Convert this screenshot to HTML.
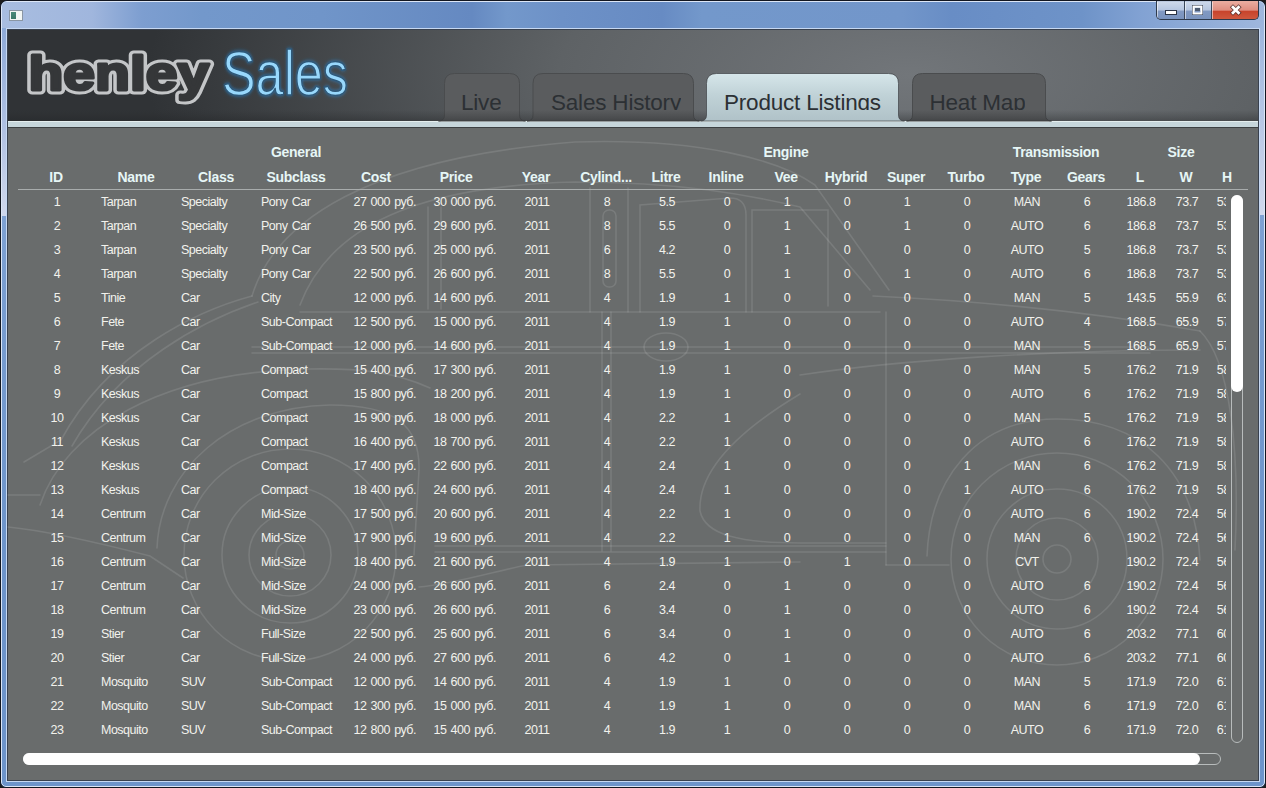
<!DOCTYPE html>
<html><head><meta charset="utf-8">
<style>
*{margin:0;padding:0;box-sizing:border-box}
html,body{width:1266px;height:788px;overflow:hidden;background:#1c1c1c}
body{position:relative;font-family:"Liberation Sans",sans-serif}
.abs{position:absolute}
#frame{position:absolute;left:0;top:0;width:1266px;height:788px;border-radius:7px 7px 6px 6px;overflow:hidden;
  background:linear-gradient(180deg,rgba(170,195,230,0.5) 0%,rgba(150,180,225,0.25) 40%,rgba(110,150,205,0) 70%),#6d94ca;
  border:1px solid #121620;}
#tb{position:absolute;left:2px;top:2px;width:1262px;height:26px;border-radius:5px 5px 0 0;background:linear-gradient(90deg,#a8bde0 0px,#a0b6dd 90px,#7d9ed0 140px,#7398cb 200px,#7095c9 320px,#6589c1 470px,#7398cb 505px,#6d91c7 560px,#678bc3 660px,#7398cb 700px,#7296ca 900px,#688dc5 950px,#6e93c8 1080px,#82a2d3 1140px,#9fb7dd 1262px)}
#frame:before{content:"";position:absolute;left:0;top:0;right:0;bottom:0;border:1px solid #dce6f6;border-radius:6px 6px 5px 5px}
#sideL{position:absolute;left:2px;top:29px;width:4px;height:187px;background:linear-gradient(#8eaad8,#b4c4e4 60%,#d0d8ec)}
#sideR{position:absolute;left:1260px;top:20px;width:4px;height:195px;background:linear-gradient(#9ab4dc,#bccae6 60%,#d0d8ec)}
#inner{position:absolute;left:6px;top:28px;width:1254px;height:754px;border:1px solid #c6d8f2}
#content{position:absolute;left:7px;top:29px;width:1252px;height:752px;border:1px solid #39414e;background:#696c6c;overflow:hidden}
#hdr{position:absolute;left:0;top:0;width:1250px;height:91px;
  background:radial-gradient(ellipse 760px 300px at 900px 45px,#72767a 0%,#5e6265 46%,#303336 100%)}
#hdrshade{position:absolute;left:0;top:75px;width:1250px;height:16px;background:linear-gradient(rgba(40,42,44,0),rgba(40,42,44,0.35))}
#band{position:absolute;left:0;top:91px;width:1250px;height:6px;background:#c6d6db;border-top:1px solid #e4eeee}
#bandline{position:absolute;left:0;top:97px;width:1250px;height:1px;background:#3c4042}
.dt{position:absolute;word-spacing:1.2px;font-size:12.5px;letter-spacing:-0.5px;color:#f2f2ec;line-height:18px;white-space:nowrap}
.hd{position:absolute;font-size:14px;letter-spacing:-0.3px;color:#e6f6f6;font-weight:bold;line-height:18px;white-space:nowrap}
#tbl{position:absolute;left:0;top:0;width:1266px;height:788px}
#clip{position:absolute;left:0;top:0;width:1226px;height:745px;overflow:hidden}
#sep{position:absolute;left:18px;top:189px;width:1230px;height:1px;background:#a8acac}
#vtrack{position:absolute;left:1231px;top:195px;width:12px;height:548px;border:1px solid #b8bcbc;border-radius:6px}
#vthumb{position:absolute;left:1231px;top:195px;width:12px;height:197px;background:#fff;border-radius:6px}
#htrack{position:absolute;left:23px;top:753px;width:1198px;height:12px;border:1px solid #b8bcbc;border-radius:6px}
#hthumb{position:absolute;left:23px;top:753px;width:1177px;height:12px;background:#fff;border-radius:6px}
.tl{position:absolute;top:89.5px;font-size:22.5px;color:#2c3034;white-space:nowrap;letter-spacing:-0.2px;height:20.5px;overflow:hidden;line-height:26px}
.tab{position:absolute;top:73px;height:48px;border-radius:11px 11px 0 0;background:#5b5d5e;border:1px solid #4c4e50;border-bottom:none;overflow:hidden}
.tab span{position:absolute;top:15.5px;font-size:22.5px;color:#2c3034;white-space:nowrap;letter-spacing:-0.3px;height:21px;overflow:hidden;line-height:26px}
#btns{position:absolute;left:1156px;top:1px;width:103px;height:19px;border:1px solid #2e3a4c;border-top:none;border-radius:0 0 5px 5px;overflow:hidden;background:#777}
#btns div{position:absolute;top:0;height:19px;border-left:1px solid rgba(255,255,255,0.55);border-top:1px solid rgba(255,255,255,0.5)}
#bmin{left:0;width:28px;background:linear-gradient(#cdd8ea 0%,#b6c6e0 45%,#8199c2 50%,#7892bd 100%)}
#bmax{left:28px;width:27px;background:linear-gradient(#cdd8ea 0%,#b6c6e0 45%,#8199c2 50%,#7892bd 100%);box-shadow:-1px 0 0 #3a4658}
#bcls{left:55px;width:47px;background:linear-gradient(#eaaa9e 0%,#df8e80 45%,#c8442c 52%,#d05a40 100%);box-shadow:-1px 0 0 #3a4658}
#wicon{position:absolute;left:9px;top:10px;width:14px;height:11px;background:#f2f6f4;border:1px solid #8a96a4}
#wicon:before{content:"";position:absolute;left:1px;top:1px;width:5px;height:7px;background:linear-gradient(#4a8a7a,#3a7868)}
</style></head><body>
<div id="frame"></div>
<div id="tb"></div>
<div id="sideL"></div><div id="sideR"></div>
<div id="inner"></div>
<div id="wicon"></div>
<div id="btns"><div id="bmin"></div><div id="bmax"></div><div id="bcls"></div></div>
<svg class="abs" style="left:1150px;top:0" width="116" height="22">
 <rect x="15.5" y="10.5" width="11" height="4" fill="#fff" stroke="#2a3344" stroke-width="1"/>
 <rect x="42.5" y="5.5" width="10" height="9" fill="none" stroke="#2a3344" stroke-width="1"/>
 <rect x="43.5" y="6.5" width="8" height="7" fill="none" stroke="#fff" stroke-width="2"/>
 <rect x="45" y="8" width="5" height="3" fill="#4c5a70"/>
 <path d="M83,7.3 L88.5,12.7 M88.5,7.3 L83,12.7" stroke="#4a2a28" stroke-width="4.4" stroke-linecap="square" opacity="0.85"/>
 <path d="M83,7.3 L88.5,12.7 M88.5,7.3 L83,12.7" stroke="#ffffff" stroke-width="2.8" stroke-linecap="square"/>
</svg>
<div id="content">
 <div id="hdr"></div>

 <div id="band"></div>
 <div id="bandline"></div>
</div>
<svg class="abs" style="left:0;top:0" width="1266" height="788">
<g fill="none" stroke="#ffffff" stroke-opacity="0.11" stroke-width="1.6" stroke-linecap="round">
 <circle cx="290" cy="555" r="14"/><circle cx="290" cy="555" r="41"/><circle cx="290" cy="555" r="68"/><circle cx="290" cy="555" r="106"/>
 <circle cx="1057" cy="559" r="14"/><circle cx="1057" cy="559" r="41"/><circle cx="1057" cy="559" r="70"/><circle cx="1057" cy="559" r="106"/>
 <path d="M157,548 C160,470 230,407 330,405 C395,405 420,425 419,470 L414,555"/>
 <path d="M40,505 C65,430 160,372 308,369 C360,368 395,372 430,388"/>
 <path d="M927,556 C930,480 975,419 1057,419 C1140,419 1195,470 1200,560"/>
 <path d="M252,296 C275,220 370,158 575,142 C700,138 780,160 815,185 L889,290"/>
 <path d="M300,305 C330,225 420,186 575,182 C680,182 750,195 800,207 L870,290"/>
 <path d="M252,296 C200,310 110,350 61,440 L24,462"/>
 <path d="M258,302 C205,320 120,362 72,446"/>
 <path d="M428,207 L428,309 M441,207 L441,309"/>
 <path d="M590,188 L590,312 M628,188 L628,312"/>
 <rect x="603" y="210" width="13" height="77" rx="6"/>
 <path d="M640,312 L640,205 L730,198 Q746,198 746,215 L746,312"/>
 <path d="M752,312 L752,210 L828,210 L828,306"/>
 <path d="M300,312 L880,312"/>
 <path d="M252,347 L1150,347 M252,353 L1150,353"/>
 <ellipse cx="666" cy="347" rx="22" ry="14"/>
 <path d="M602,312 L602,551 M611,312 L611,551 M886,312 L886,565"/>
 <path d="M435,546 L886,546 M435,552 L886,552 M886,565 L949,565"/>
 <path d="M419,587 C450,585 500,570 527,565 L800,562"/>
 <path d="M873,296 C960,300 1080,310 1200,331"/>
 <path d="M8,495 L40,495 M8,527 C40,530 80,538 150,556 L183,578"/>
 <path d="M1200,331 C1230,360 1240,450 1235,550"/>
 <path d="M800,394 C740,430 698,470 700,511 C705,535 740,543 800,543 L886,543"/>
 <path d="M800,375 C900,360 1050,350 1200,350"/>
</g>
</svg>

<div id="tbl">
 <div id="clip">
<div class="dt" style="left:17px;top:192.5px;width:80px;text-align:center">1</div>
<div class="dt" style="left:101px;top:192.5px">Tarpan</div>
<div class="dt" style="left:181px;top:192.5px">Specialty</div>
<div class="dt" style="left:261px;top:192.5px">Pony Car</div>
<div class="dt" style="left:336px;top:192.5px;width:80px;text-align:right">27 000 руб.</div>
<div class="dt" style="left:416px;top:192.5px;width:80px;text-align:right">30 000 руб.</div>
<div class="dt" style="left:497px;top:192.5px;width:80px;text-align:center">2011</div>
<div class="dt" style="left:577px;top:192.5px;width:60px;text-align:center">8</div>
<div class="dt" style="left:637px;top:192.5px;width:60px;text-align:center">5.5</div>
<div class="dt" style="left:697px;top:192.5px;width:60px;text-align:center">0</div>
<div class="dt" style="left:757px;top:192.5px;width:60px;text-align:center">1</div>
<div class="dt" style="left:817px;top:192.5px;width:60px;text-align:center">0</div>
<div class="dt" style="left:877px;top:192.5px;width:60px;text-align:center">1</div>
<div class="dt" style="left:937px;top:192.5px;width:60px;text-align:center">0</div>
<div class="dt" style="left:997px;top:192.5px;width:60px;text-align:center">MAN</div>
<div class="dt" style="left:1057px;top:192.5px;width:60px;text-align:center">6</div>
<div class="dt" style="left:1117px;top:192.5px;width:48px;text-align:center">186.8</div>
<div class="dt" style="left:1165px;top:192.5px;width:44px;text-align:center">73.7</div>
<div class="dt" style="left:1209px;top:192.5px;width:38px;text-align:center">53.3</div>
<div class="dt" style="left:17px;top:216.5px;width:80px;text-align:center">2</div>
<div class="dt" style="left:101px;top:216.5px">Tarpan</div>
<div class="dt" style="left:181px;top:216.5px">Specialty</div>
<div class="dt" style="left:261px;top:216.5px">Pony Car</div>
<div class="dt" style="left:336px;top:216.5px;width:80px;text-align:right">26 500 руб.</div>
<div class="dt" style="left:416px;top:216.5px;width:80px;text-align:right">29 600 руб.</div>
<div class="dt" style="left:497px;top:216.5px;width:80px;text-align:center">2011</div>
<div class="dt" style="left:577px;top:216.5px;width:60px;text-align:center">8</div>
<div class="dt" style="left:637px;top:216.5px;width:60px;text-align:center">5.5</div>
<div class="dt" style="left:697px;top:216.5px;width:60px;text-align:center">0</div>
<div class="dt" style="left:757px;top:216.5px;width:60px;text-align:center">1</div>
<div class="dt" style="left:817px;top:216.5px;width:60px;text-align:center">0</div>
<div class="dt" style="left:877px;top:216.5px;width:60px;text-align:center">1</div>
<div class="dt" style="left:937px;top:216.5px;width:60px;text-align:center">0</div>
<div class="dt" style="left:997px;top:216.5px;width:60px;text-align:center">AUTO</div>
<div class="dt" style="left:1057px;top:216.5px;width:60px;text-align:center">6</div>
<div class="dt" style="left:1117px;top:216.5px;width:48px;text-align:center">186.8</div>
<div class="dt" style="left:1165px;top:216.5px;width:44px;text-align:center">73.7</div>
<div class="dt" style="left:1209px;top:216.5px;width:38px;text-align:center">53.3</div>
<div class="dt" style="left:17px;top:240.5px;width:80px;text-align:center">3</div>
<div class="dt" style="left:101px;top:240.5px">Tarpan</div>
<div class="dt" style="left:181px;top:240.5px">Specialty</div>
<div class="dt" style="left:261px;top:240.5px">Pony Car</div>
<div class="dt" style="left:336px;top:240.5px;width:80px;text-align:right">23 500 руб.</div>
<div class="dt" style="left:416px;top:240.5px;width:80px;text-align:right">25 000 руб.</div>
<div class="dt" style="left:497px;top:240.5px;width:80px;text-align:center">2011</div>
<div class="dt" style="left:577px;top:240.5px;width:60px;text-align:center">6</div>
<div class="dt" style="left:637px;top:240.5px;width:60px;text-align:center">4.2</div>
<div class="dt" style="left:697px;top:240.5px;width:60px;text-align:center">0</div>
<div class="dt" style="left:757px;top:240.5px;width:60px;text-align:center">1</div>
<div class="dt" style="left:817px;top:240.5px;width:60px;text-align:center">0</div>
<div class="dt" style="left:877px;top:240.5px;width:60px;text-align:center">0</div>
<div class="dt" style="left:937px;top:240.5px;width:60px;text-align:center">0</div>
<div class="dt" style="left:997px;top:240.5px;width:60px;text-align:center">AUTO</div>
<div class="dt" style="left:1057px;top:240.5px;width:60px;text-align:center">5</div>
<div class="dt" style="left:1117px;top:240.5px;width:48px;text-align:center">186.8</div>
<div class="dt" style="left:1165px;top:240.5px;width:44px;text-align:center">73.7</div>
<div class="dt" style="left:1209px;top:240.5px;width:38px;text-align:center">53.3</div>
<div class="dt" style="left:17px;top:264.5px;width:80px;text-align:center">4</div>
<div class="dt" style="left:101px;top:264.5px">Tarpan</div>
<div class="dt" style="left:181px;top:264.5px">Specialty</div>
<div class="dt" style="left:261px;top:264.5px">Pony Car</div>
<div class="dt" style="left:336px;top:264.5px;width:80px;text-align:right">22 500 руб.</div>
<div class="dt" style="left:416px;top:264.5px;width:80px;text-align:right">26 600 руб.</div>
<div class="dt" style="left:497px;top:264.5px;width:80px;text-align:center">2011</div>
<div class="dt" style="left:577px;top:264.5px;width:60px;text-align:center">8</div>
<div class="dt" style="left:637px;top:264.5px;width:60px;text-align:center">5.5</div>
<div class="dt" style="left:697px;top:264.5px;width:60px;text-align:center">0</div>
<div class="dt" style="left:757px;top:264.5px;width:60px;text-align:center">1</div>
<div class="dt" style="left:817px;top:264.5px;width:60px;text-align:center">0</div>
<div class="dt" style="left:877px;top:264.5px;width:60px;text-align:center">1</div>
<div class="dt" style="left:937px;top:264.5px;width:60px;text-align:center">0</div>
<div class="dt" style="left:997px;top:264.5px;width:60px;text-align:center">AUTO</div>
<div class="dt" style="left:1057px;top:264.5px;width:60px;text-align:center">6</div>
<div class="dt" style="left:1117px;top:264.5px;width:48px;text-align:center">186.8</div>
<div class="dt" style="left:1165px;top:264.5px;width:44px;text-align:center">73.7</div>
<div class="dt" style="left:1209px;top:264.5px;width:38px;text-align:center">53.3</div>
<div class="dt" style="left:17px;top:288.5px;width:80px;text-align:center">5</div>
<div class="dt" style="left:101px;top:288.5px">Tinie</div>
<div class="dt" style="left:181px;top:288.5px">Car</div>
<div class="dt" style="left:261px;top:288.5px">City</div>
<div class="dt" style="left:336px;top:288.5px;width:80px;text-align:right">12 000 руб.</div>
<div class="dt" style="left:416px;top:288.5px;width:80px;text-align:right">14 600 руб.</div>
<div class="dt" style="left:497px;top:288.5px;width:80px;text-align:center">2011</div>
<div class="dt" style="left:577px;top:288.5px;width:60px;text-align:center">4</div>
<div class="dt" style="left:637px;top:288.5px;width:60px;text-align:center">1.9</div>
<div class="dt" style="left:697px;top:288.5px;width:60px;text-align:center">1</div>
<div class="dt" style="left:757px;top:288.5px;width:60px;text-align:center">0</div>
<div class="dt" style="left:817px;top:288.5px;width:60px;text-align:center">0</div>
<div class="dt" style="left:877px;top:288.5px;width:60px;text-align:center">0</div>
<div class="dt" style="left:937px;top:288.5px;width:60px;text-align:center">0</div>
<div class="dt" style="left:997px;top:288.5px;width:60px;text-align:center">MAN</div>
<div class="dt" style="left:1057px;top:288.5px;width:60px;text-align:center">5</div>
<div class="dt" style="left:1117px;top:288.5px;width:48px;text-align:center">143.5</div>
<div class="dt" style="left:1165px;top:288.5px;width:44px;text-align:center">55.9</div>
<div class="dt" style="left:1209px;top:288.5px;width:38px;text-align:center">63.1</div>
<div class="dt" style="left:17px;top:312.5px;width:80px;text-align:center">6</div>
<div class="dt" style="left:101px;top:312.5px">Fete</div>
<div class="dt" style="left:181px;top:312.5px">Car</div>
<div class="dt" style="left:261px;top:312.5px">Sub-Compact</div>
<div class="dt" style="left:336px;top:312.5px;width:80px;text-align:right">12 500 руб.</div>
<div class="dt" style="left:416px;top:312.5px;width:80px;text-align:right">15 000 руб.</div>
<div class="dt" style="left:497px;top:312.5px;width:80px;text-align:center">2011</div>
<div class="dt" style="left:577px;top:312.5px;width:60px;text-align:center">4</div>
<div class="dt" style="left:637px;top:312.5px;width:60px;text-align:center">1.9</div>
<div class="dt" style="left:697px;top:312.5px;width:60px;text-align:center">1</div>
<div class="dt" style="left:757px;top:312.5px;width:60px;text-align:center">0</div>
<div class="dt" style="left:817px;top:312.5px;width:60px;text-align:center">0</div>
<div class="dt" style="left:877px;top:312.5px;width:60px;text-align:center">0</div>
<div class="dt" style="left:937px;top:312.5px;width:60px;text-align:center">0</div>
<div class="dt" style="left:997px;top:312.5px;width:60px;text-align:center">AUTO</div>
<div class="dt" style="left:1057px;top:312.5px;width:60px;text-align:center">4</div>
<div class="dt" style="left:1117px;top:312.5px;width:48px;text-align:center">168.5</div>
<div class="dt" style="left:1165px;top:312.5px;width:44px;text-align:center">65.9</div>
<div class="dt" style="left:1209px;top:312.5px;width:38px;text-align:center">57.1</div>
<div class="dt" style="left:17px;top:336.5px;width:80px;text-align:center">7</div>
<div class="dt" style="left:101px;top:336.5px">Fete</div>
<div class="dt" style="left:181px;top:336.5px">Car</div>
<div class="dt" style="left:261px;top:336.5px">Sub-Compact</div>
<div class="dt" style="left:336px;top:336.5px;width:80px;text-align:right">12 000 руб.</div>
<div class="dt" style="left:416px;top:336.5px;width:80px;text-align:right">14 600 руб.</div>
<div class="dt" style="left:497px;top:336.5px;width:80px;text-align:center">2011</div>
<div class="dt" style="left:577px;top:336.5px;width:60px;text-align:center">4</div>
<div class="dt" style="left:637px;top:336.5px;width:60px;text-align:center">1.9</div>
<div class="dt" style="left:697px;top:336.5px;width:60px;text-align:center">1</div>
<div class="dt" style="left:757px;top:336.5px;width:60px;text-align:center">0</div>
<div class="dt" style="left:817px;top:336.5px;width:60px;text-align:center">0</div>
<div class="dt" style="left:877px;top:336.5px;width:60px;text-align:center">0</div>
<div class="dt" style="left:937px;top:336.5px;width:60px;text-align:center">0</div>
<div class="dt" style="left:997px;top:336.5px;width:60px;text-align:center">MAN</div>
<div class="dt" style="left:1057px;top:336.5px;width:60px;text-align:center">5</div>
<div class="dt" style="left:1117px;top:336.5px;width:48px;text-align:center">168.5</div>
<div class="dt" style="left:1165px;top:336.5px;width:44px;text-align:center">65.9</div>
<div class="dt" style="left:1209px;top:336.5px;width:38px;text-align:center">57.1</div>
<div class="dt" style="left:17px;top:360.5px;width:80px;text-align:center">8</div>
<div class="dt" style="left:101px;top:360.5px">Keskus</div>
<div class="dt" style="left:181px;top:360.5px">Car</div>
<div class="dt" style="left:261px;top:360.5px">Compact</div>
<div class="dt" style="left:336px;top:360.5px;width:80px;text-align:right">15 400 руб.</div>
<div class="dt" style="left:416px;top:360.5px;width:80px;text-align:right">17 300 руб.</div>
<div class="dt" style="left:497px;top:360.5px;width:80px;text-align:center">2011</div>
<div class="dt" style="left:577px;top:360.5px;width:60px;text-align:center">4</div>
<div class="dt" style="left:637px;top:360.5px;width:60px;text-align:center">1.9</div>
<div class="dt" style="left:697px;top:360.5px;width:60px;text-align:center">1</div>
<div class="dt" style="left:757px;top:360.5px;width:60px;text-align:center">0</div>
<div class="dt" style="left:817px;top:360.5px;width:60px;text-align:center">0</div>
<div class="dt" style="left:877px;top:360.5px;width:60px;text-align:center">0</div>
<div class="dt" style="left:937px;top:360.5px;width:60px;text-align:center">0</div>
<div class="dt" style="left:997px;top:360.5px;width:60px;text-align:center">MAN</div>
<div class="dt" style="left:1057px;top:360.5px;width:60px;text-align:center">5</div>
<div class="dt" style="left:1117px;top:360.5px;width:48px;text-align:center">176.2</div>
<div class="dt" style="left:1165px;top:360.5px;width:44px;text-align:center">71.9</div>
<div class="dt" style="left:1209px;top:360.5px;width:38px;text-align:center">58.6</div>
<div class="dt" style="left:17px;top:384.5px;width:80px;text-align:center">9</div>
<div class="dt" style="left:101px;top:384.5px">Keskus</div>
<div class="dt" style="left:181px;top:384.5px">Car</div>
<div class="dt" style="left:261px;top:384.5px">Compact</div>
<div class="dt" style="left:336px;top:384.5px;width:80px;text-align:right">15 800 руб.</div>
<div class="dt" style="left:416px;top:384.5px;width:80px;text-align:right">18 200 руб.</div>
<div class="dt" style="left:497px;top:384.5px;width:80px;text-align:center">2011</div>
<div class="dt" style="left:577px;top:384.5px;width:60px;text-align:center">4</div>
<div class="dt" style="left:637px;top:384.5px;width:60px;text-align:center">1.9</div>
<div class="dt" style="left:697px;top:384.5px;width:60px;text-align:center">1</div>
<div class="dt" style="left:757px;top:384.5px;width:60px;text-align:center">0</div>
<div class="dt" style="left:817px;top:384.5px;width:60px;text-align:center">0</div>
<div class="dt" style="left:877px;top:384.5px;width:60px;text-align:center">0</div>
<div class="dt" style="left:937px;top:384.5px;width:60px;text-align:center">0</div>
<div class="dt" style="left:997px;top:384.5px;width:60px;text-align:center">AUTO</div>
<div class="dt" style="left:1057px;top:384.5px;width:60px;text-align:center">6</div>
<div class="dt" style="left:1117px;top:384.5px;width:48px;text-align:center">176.2</div>
<div class="dt" style="left:1165px;top:384.5px;width:44px;text-align:center">71.9</div>
<div class="dt" style="left:1209px;top:384.5px;width:38px;text-align:center">58.6</div>
<div class="dt" style="left:17px;top:408.5px;width:80px;text-align:center">10</div>
<div class="dt" style="left:101px;top:408.5px">Keskus</div>
<div class="dt" style="left:181px;top:408.5px">Car</div>
<div class="dt" style="left:261px;top:408.5px">Compact</div>
<div class="dt" style="left:336px;top:408.5px;width:80px;text-align:right">15 900 руб.</div>
<div class="dt" style="left:416px;top:408.5px;width:80px;text-align:right">18 000 руб.</div>
<div class="dt" style="left:497px;top:408.5px;width:80px;text-align:center">2011</div>
<div class="dt" style="left:577px;top:408.5px;width:60px;text-align:center">4</div>
<div class="dt" style="left:637px;top:408.5px;width:60px;text-align:center">2.2</div>
<div class="dt" style="left:697px;top:408.5px;width:60px;text-align:center">1</div>
<div class="dt" style="left:757px;top:408.5px;width:60px;text-align:center">0</div>
<div class="dt" style="left:817px;top:408.5px;width:60px;text-align:center">0</div>
<div class="dt" style="left:877px;top:408.5px;width:60px;text-align:center">0</div>
<div class="dt" style="left:937px;top:408.5px;width:60px;text-align:center">0</div>
<div class="dt" style="left:997px;top:408.5px;width:60px;text-align:center">MAN</div>
<div class="dt" style="left:1057px;top:408.5px;width:60px;text-align:center">5</div>
<div class="dt" style="left:1117px;top:408.5px;width:48px;text-align:center">176.2</div>
<div class="dt" style="left:1165px;top:408.5px;width:44px;text-align:center">71.9</div>
<div class="dt" style="left:1209px;top:408.5px;width:38px;text-align:center">58.6</div>
<div class="dt" style="left:17px;top:432.5px;width:80px;text-align:center">11</div>
<div class="dt" style="left:101px;top:432.5px">Keskus</div>
<div class="dt" style="left:181px;top:432.5px">Car</div>
<div class="dt" style="left:261px;top:432.5px">Compact</div>
<div class="dt" style="left:336px;top:432.5px;width:80px;text-align:right">16 400 руб.</div>
<div class="dt" style="left:416px;top:432.5px;width:80px;text-align:right">18 700 руб.</div>
<div class="dt" style="left:497px;top:432.5px;width:80px;text-align:center">2011</div>
<div class="dt" style="left:577px;top:432.5px;width:60px;text-align:center">4</div>
<div class="dt" style="left:637px;top:432.5px;width:60px;text-align:center">2.2</div>
<div class="dt" style="left:697px;top:432.5px;width:60px;text-align:center">1</div>
<div class="dt" style="left:757px;top:432.5px;width:60px;text-align:center">0</div>
<div class="dt" style="left:817px;top:432.5px;width:60px;text-align:center">0</div>
<div class="dt" style="left:877px;top:432.5px;width:60px;text-align:center">0</div>
<div class="dt" style="left:937px;top:432.5px;width:60px;text-align:center">0</div>
<div class="dt" style="left:997px;top:432.5px;width:60px;text-align:center">AUTO</div>
<div class="dt" style="left:1057px;top:432.5px;width:60px;text-align:center">6</div>
<div class="dt" style="left:1117px;top:432.5px;width:48px;text-align:center">176.2</div>
<div class="dt" style="left:1165px;top:432.5px;width:44px;text-align:center">71.9</div>
<div class="dt" style="left:1209px;top:432.5px;width:38px;text-align:center">58.6</div>
<div class="dt" style="left:17px;top:456.5px;width:80px;text-align:center">12</div>
<div class="dt" style="left:101px;top:456.5px">Keskus</div>
<div class="dt" style="left:181px;top:456.5px">Car</div>
<div class="dt" style="left:261px;top:456.5px">Compact</div>
<div class="dt" style="left:336px;top:456.5px;width:80px;text-align:right">17 400 руб.</div>
<div class="dt" style="left:416px;top:456.5px;width:80px;text-align:right">22 600 руб.</div>
<div class="dt" style="left:497px;top:456.5px;width:80px;text-align:center">2011</div>
<div class="dt" style="left:577px;top:456.5px;width:60px;text-align:center">4</div>
<div class="dt" style="left:637px;top:456.5px;width:60px;text-align:center">2.4</div>
<div class="dt" style="left:697px;top:456.5px;width:60px;text-align:center">1</div>
<div class="dt" style="left:757px;top:456.5px;width:60px;text-align:center">0</div>
<div class="dt" style="left:817px;top:456.5px;width:60px;text-align:center">0</div>
<div class="dt" style="left:877px;top:456.5px;width:60px;text-align:center">0</div>
<div class="dt" style="left:937px;top:456.5px;width:60px;text-align:center">1</div>
<div class="dt" style="left:997px;top:456.5px;width:60px;text-align:center">MAN</div>
<div class="dt" style="left:1057px;top:456.5px;width:60px;text-align:center">6</div>
<div class="dt" style="left:1117px;top:456.5px;width:48px;text-align:center">176.2</div>
<div class="dt" style="left:1165px;top:456.5px;width:44px;text-align:center">71.9</div>
<div class="dt" style="left:1209px;top:456.5px;width:38px;text-align:center">58.6</div>
<div class="dt" style="left:17px;top:480.5px;width:80px;text-align:center">13</div>
<div class="dt" style="left:101px;top:480.5px">Keskus</div>
<div class="dt" style="left:181px;top:480.5px">Car</div>
<div class="dt" style="left:261px;top:480.5px">Compact</div>
<div class="dt" style="left:336px;top:480.5px;width:80px;text-align:right">18 400 руб.</div>
<div class="dt" style="left:416px;top:480.5px;width:80px;text-align:right">24 600 руб.</div>
<div class="dt" style="left:497px;top:480.5px;width:80px;text-align:center">2011</div>
<div class="dt" style="left:577px;top:480.5px;width:60px;text-align:center">4</div>
<div class="dt" style="left:637px;top:480.5px;width:60px;text-align:center">2.4</div>
<div class="dt" style="left:697px;top:480.5px;width:60px;text-align:center">1</div>
<div class="dt" style="left:757px;top:480.5px;width:60px;text-align:center">0</div>
<div class="dt" style="left:817px;top:480.5px;width:60px;text-align:center">0</div>
<div class="dt" style="left:877px;top:480.5px;width:60px;text-align:center">0</div>
<div class="dt" style="left:937px;top:480.5px;width:60px;text-align:center">1</div>
<div class="dt" style="left:997px;top:480.5px;width:60px;text-align:center">AUTO</div>
<div class="dt" style="left:1057px;top:480.5px;width:60px;text-align:center">6</div>
<div class="dt" style="left:1117px;top:480.5px;width:48px;text-align:center">176.2</div>
<div class="dt" style="left:1165px;top:480.5px;width:44px;text-align:center">71.9</div>
<div class="dt" style="left:1209px;top:480.5px;width:38px;text-align:center">58.6</div>
<div class="dt" style="left:17px;top:504.5px;width:80px;text-align:center">14</div>
<div class="dt" style="left:101px;top:504.5px">Centrum</div>
<div class="dt" style="left:181px;top:504.5px">Car</div>
<div class="dt" style="left:261px;top:504.5px">Mid-Size</div>
<div class="dt" style="left:336px;top:504.5px;width:80px;text-align:right">17 500 руб.</div>
<div class="dt" style="left:416px;top:504.5px;width:80px;text-align:right">20 600 руб.</div>
<div class="dt" style="left:497px;top:504.5px;width:80px;text-align:center">2011</div>
<div class="dt" style="left:577px;top:504.5px;width:60px;text-align:center">4</div>
<div class="dt" style="left:637px;top:504.5px;width:60px;text-align:center">2.2</div>
<div class="dt" style="left:697px;top:504.5px;width:60px;text-align:center">1</div>
<div class="dt" style="left:757px;top:504.5px;width:60px;text-align:center">0</div>
<div class="dt" style="left:817px;top:504.5px;width:60px;text-align:center">0</div>
<div class="dt" style="left:877px;top:504.5px;width:60px;text-align:center">0</div>
<div class="dt" style="left:937px;top:504.5px;width:60px;text-align:center">0</div>
<div class="dt" style="left:997px;top:504.5px;width:60px;text-align:center">AUTO</div>
<div class="dt" style="left:1057px;top:504.5px;width:60px;text-align:center">6</div>
<div class="dt" style="left:1117px;top:504.5px;width:48px;text-align:center">190.2</div>
<div class="dt" style="left:1165px;top:504.5px;width:44px;text-align:center">72.4</div>
<div class="dt" style="left:1209px;top:504.5px;width:38px;text-align:center">56.5</div>
<div class="dt" style="left:17px;top:528.5px;width:80px;text-align:center">15</div>
<div class="dt" style="left:101px;top:528.5px">Centrum</div>
<div class="dt" style="left:181px;top:528.5px">Car</div>
<div class="dt" style="left:261px;top:528.5px">Mid-Size</div>
<div class="dt" style="left:336px;top:528.5px;width:80px;text-align:right">17 900 руб.</div>
<div class="dt" style="left:416px;top:528.5px;width:80px;text-align:right">19 600 руб.</div>
<div class="dt" style="left:497px;top:528.5px;width:80px;text-align:center">2011</div>
<div class="dt" style="left:577px;top:528.5px;width:60px;text-align:center">4</div>
<div class="dt" style="left:637px;top:528.5px;width:60px;text-align:center">2.2</div>
<div class="dt" style="left:697px;top:528.5px;width:60px;text-align:center">1</div>
<div class="dt" style="left:757px;top:528.5px;width:60px;text-align:center">0</div>
<div class="dt" style="left:817px;top:528.5px;width:60px;text-align:center">0</div>
<div class="dt" style="left:877px;top:528.5px;width:60px;text-align:center">0</div>
<div class="dt" style="left:937px;top:528.5px;width:60px;text-align:center">0</div>
<div class="dt" style="left:997px;top:528.5px;width:60px;text-align:center">MAN</div>
<div class="dt" style="left:1057px;top:528.5px;width:60px;text-align:center">6</div>
<div class="dt" style="left:1117px;top:528.5px;width:48px;text-align:center">190.2</div>
<div class="dt" style="left:1165px;top:528.5px;width:44px;text-align:center">72.4</div>
<div class="dt" style="left:1209px;top:528.5px;width:38px;text-align:center">56.5</div>
<div class="dt" style="left:17px;top:552.5px;width:80px;text-align:center">16</div>
<div class="dt" style="left:101px;top:552.5px">Centrum</div>
<div class="dt" style="left:181px;top:552.5px">Car</div>
<div class="dt" style="left:261px;top:552.5px">Mid-Size</div>
<div class="dt" style="left:336px;top:552.5px;width:80px;text-align:right">18 400 руб.</div>
<div class="dt" style="left:416px;top:552.5px;width:80px;text-align:right">21 600 руб.</div>
<div class="dt" style="left:497px;top:552.5px;width:80px;text-align:center">2011</div>
<div class="dt" style="left:577px;top:552.5px;width:60px;text-align:center">4</div>
<div class="dt" style="left:637px;top:552.5px;width:60px;text-align:center">1.9</div>
<div class="dt" style="left:697px;top:552.5px;width:60px;text-align:center">1</div>
<div class="dt" style="left:757px;top:552.5px;width:60px;text-align:center">0</div>
<div class="dt" style="left:817px;top:552.5px;width:60px;text-align:center">1</div>
<div class="dt" style="left:877px;top:552.5px;width:60px;text-align:center">0</div>
<div class="dt" style="left:937px;top:552.5px;width:60px;text-align:center">0</div>
<div class="dt" style="left:997px;top:552.5px;width:60px;text-align:center">CVT</div>
<div class="dt" style="left:1057px;top:552.5px;width:60px;text-align:center"></div>
<div class="dt" style="left:1117px;top:552.5px;width:48px;text-align:center">190.2</div>
<div class="dt" style="left:1165px;top:552.5px;width:44px;text-align:center">72.4</div>
<div class="dt" style="left:1209px;top:552.5px;width:38px;text-align:center">56.5</div>
<div class="dt" style="left:17px;top:576.5px;width:80px;text-align:center">17</div>
<div class="dt" style="left:101px;top:576.5px">Centrum</div>
<div class="dt" style="left:181px;top:576.5px">Car</div>
<div class="dt" style="left:261px;top:576.5px">Mid-Size</div>
<div class="dt" style="left:336px;top:576.5px;width:80px;text-align:right">24 000 руб.</div>
<div class="dt" style="left:416px;top:576.5px;width:80px;text-align:right">26 600 руб.</div>
<div class="dt" style="left:497px;top:576.5px;width:80px;text-align:center">2011</div>
<div class="dt" style="left:577px;top:576.5px;width:60px;text-align:center">6</div>
<div class="dt" style="left:637px;top:576.5px;width:60px;text-align:center">2.4</div>
<div class="dt" style="left:697px;top:576.5px;width:60px;text-align:center">0</div>
<div class="dt" style="left:757px;top:576.5px;width:60px;text-align:center">1</div>
<div class="dt" style="left:817px;top:576.5px;width:60px;text-align:center">0</div>
<div class="dt" style="left:877px;top:576.5px;width:60px;text-align:center">0</div>
<div class="dt" style="left:937px;top:576.5px;width:60px;text-align:center">0</div>
<div class="dt" style="left:997px;top:576.5px;width:60px;text-align:center">AUTO</div>
<div class="dt" style="left:1057px;top:576.5px;width:60px;text-align:center">6</div>
<div class="dt" style="left:1117px;top:576.5px;width:48px;text-align:center">190.2</div>
<div class="dt" style="left:1165px;top:576.5px;width:44px;text-align:center">72.4</div>
<div class="dt" style="left:1209px;top:576.5px;width:38px;text-align:center">56.5</div>
<div class="dt" style="left:17px;top:600.5px;width:80px;text-align:center">18</div>
<div class="dt" style="left:101px;top:600.5px">Centrum</div>
<div class="dt" style="left:181px;top:600.5px">Car</div>
<div class="dt" style="left:261px;top:600.5px">Mid-Size</div>
<div class="dt" style="left:336px;top:600.5px;width:80px;text-align:right">23 000 руб.</div>
<div class="dt" style="left:416px;top:600.5px;width:80px;text-align:right">26 600 руб.</div>
<div class="dt" style="left:497px;top:600.5px;width:80px;text-align:center">2011</div>
<div class="dt" style="left:577px;top:600.5px;width:60px;text-align:center">6</div>
<div class="dt" style="left:637px;top:600.5px;width:60px;text-align:center">3.4</div>
<div class="dt" style="left:697px;top:600.5px;width:60px;text-align:center">0</div>
<div class="dt" style="left:757px;top:600.5px;width:60px;text-align:center">1</div>
<div class="dt" style="left:817px;top:600.5px;width:60px;text-align:center">0</div>
<div class="dt" style="left:877px;top:600.5px;width:60px;text-align:center">0</div>
<div class="dt" style="left:937px;top:600.5px;width:60px;text-align:center">0</div>
<div class="dt" style="left:997px;top:600.5px;width:60px;text-align:center">AUTO</div>
<div class="dt" style="left:1057px;top:600.5px;width:60px;text-align:center">6</div>
<div class="dt" style="left:1117px;top:600.5px;width:48px;text-align:center">190.2</div>
<div class="dt" style="left:1165px;top:600.5px;width:44px;text-align:center">72.4</div>
<div class="dt" style="left:1209px;top:600.5px;width:38px;text-align:center">56.5</div>
<div class="dt" style="left:17px;top:624.5px;width:80px;text-align:center">19</div>
<div class="dt" style="left:101px;top:624.5px">Stier</div>
<div class="dt" style="left:181px;top:624.5px">Car</div>
<div class="dt" style="left:261px;top:624.5px">Full-Size</div>
<div class="dt" style="left:336px;top:624.5px;width:80px;text-align:right">22 500 руб.</div>
<div class="dt" style="left:416px;top:624.5px;width:80px;text-align:right">25 600 руб.</div>
<div class="dt" style="left:497px;top:624.5px;width:80px;text-align:center">2011</div>
<div class="dt" style="left:577px;top:624.5px;width:60px;text-align:center">6</div>
<div class="dt" style="left:637px;top:624.5px;width:60px;text-align:center">3.4</div>
<div class="dt" style="left:697px;top:624.5px;width:60px;text-align:center">0</div>
<div class="dt" style="left:757px;top:624.5px;width:60px;text-align:center">1</div>
<div class="dt" style="left:817px;top:624.5px;width:60px;text-align:center">0</div>
<div class="dt" style="left:877px;top:624.5px;width:60px;text-align:center">0</div>
<div class="dt" style="left:937px;top:624.5px;width:60px;text-align:center">0</div>
<div class="dt" style="left:997px;top:624.5px;width:60px;text-align:center">AUTO</div>
<div class="dt" style="left:1057px;top:624.5px;width:60px;text-align:center">6</div>
<div class="dt" style="left:1117px;top:624.5px;width:48px;text-align:center">203.2</div>
<div class="dt" style="left:1165px;top:624.5px;width:44px;text-align:center">77.1</div>
<div class="dt" style="left:1209px;top:624.5px;width:38px;text-align:center">60.1</div>
<div class="dt" style="left:17px;top:648.5px;width:80px;text-align:center">20</div>
<div class="dt" style="left:101px;top:648.5px">Stier</div>
<div class="dt" style="left:181px;top:648.5px">Car</div>
<div class="dt" style="left:261px;top:648.5px">Full-Size</div>
<div class="dt" style="left:336px;top:648.5px;width:80px;text-align:right">24 000 руб.</div>
<div class="dt" style="left:416px;top:648.5px;width:80px;text-align:right">27 600 руб.</div>
<div class="dt" style="left:497px;top:648.5px;width:80px;text-align:center">2011</div>
<div class="dt" style="left:577px;top:648.5px;width:60px;text-align:center">6</div>
<div class="dt" style="left:637px;top:648.5px;width:60px;text-align:center">4.2</div>
<div class="dt" style="left:697px;top:648.5px;width:60px;text-align:center">0</div>
<div class="dt" style="left:757px;top:648.5px;width:60px;text-align:center">1</div>
<div class="dt" style="left:817px;top:648.5px;width:60px;text-align:center">0</div>
<div class="dt" style="left:877px;top:648.5px;width:60px;text-align:center">0</div>
<div class="dt" style="left:937px;top:648.5px;width:60px;text-align:center">0</div>
<div class="dt" style="left:997px;top:648.5px;width:60px;text-align:center">AUTO</div>
<div class="dt" style="left:1057px;top:648.5px;width:60px;text-align:center">6</div>
<div class="dt" style="left:1117px;top:648.5px;width:48px;text-align:center">203.2</div>
<div class="dt" style="left:1165px;top:648.5px;width:44px;text-align:center">77.1</div>
<div class="dt" style="left:1209px;top:648.5px;width:38px;text-align:center">60.1</div>
<div class="dt" style="left:17px;top:672.5px;width:80px;text-align:center">21</div>
<div class="dt" style="left:101px;top:672.5px">Mosquito</div>
<div class="dt" style="left:181px;top:672.5px">SUV</div>
<div class="dt" style="left:261px;top:672.5px">Sub-Compact</div>
<div class="dt" style="left:336px;top:672.5px;width:80px;text-align:right">12 000 руб.</div>
<div class="dt" style="left:416px;top:672.5px;width:80px;text-align:right">14 600 руб.</div>
<div class="dt" style="left:497px;top:672.5px;width:80px;text-align:center">2011</div>
<div class="dt" style="left:577px;top:672.5px;width:60px;text-align:center">4</div>
<div class="dt" style="left:637px;top:672.5px;width:60px;text-align:center">1.9</div>
<div class="dt" style="left:697px;top:672.5px;width:60px;text-align:center">1</div>
<div class="dt" style="left:757px;top:672.5px;width:60px;text-align:center">0</div>
<div class="dt" style="left:817px;top:672.5px;width:60px;text-align:center">0</div>
<div class="dt" style="left:877px;top:672.5px;width:60px;text-align:center">0</div>
<div class="dt" style="left:937px;top:672.5px;width:60px;text-align:center">0</div>
<div class="dt" style="left:997px;top:672.5px;width:60px;text-align:center">MAN</div>
<div class="dt" style="left:1057px;top:672.5px;width:60px;text-align:center">5</div>
<div class="dt" style="left:1117px;top:672.5px;width:48px;text-align:center">171.9</div>
<div class="dt" style="left:1165px;top:672.5px;width:44px;text-align:center">72.0</div>
<div class="dt" style="left:1209px;top:672.5px;width:38px;text-align:center">61.5</div>
<div class="dt" style="left:17px;top:696.5px;width:80px;text-align:center">22</div>
<div class="dt" style="left:101px;top:696.5px">Mosquito</div>
<div class="dt" style="left:181px;top:696.5px">SUV</div>
<div class="dt" style="left:261px;top:696.5px">Sub-Compact</div>
<div class="dt" style="left:336px;top:696.5px;width:80px;text-align:right">12 300 руб.</div>
<div class="dt" style="left:416px;top:696.5px;width:80px;text-align:right">15 000 руб.</div>
<div class="dt" style="left:497px;top:696.5px;width:80px;text-align:center">2011</div>
<div class="dt" style="left:577px;top:696.5px;width:60px;text-align:center">4</div>
<div class="dt" style="left:637px;top:696.5px;width:60px;text-align:center">1.9</div>
<div class="dt" style="left:697px;top:696.5px;width:60px;text-align:center">1</div>
<div class="dt" style="left:757px;top:696.5px;width:60px;text-align:center">0</div>
<div class="dt" style="left:817px;top:696.5px;width:60px;text-align:center">0</div>
<div class="dt" style="left:877px;top:696.5px;width:60px;text-align:center">0</div>
<div class="dt" style="left:937px;top:696.5px;width:60px;text-align:center">0</div>
<div class="dt" style="left:997px;top:696.5px;width:60px;text-align:center">MAN</div>
<div class="dt" style="left:1057px;top:696.5px;width:60px;text-align:center">6</div>
<div class="dt" style="left:1117px;top:696.5px;width:48px;text-align:center">171.9</div>
<div class="dt" style="left:1165px;top:696.5px;width:44px;text-align:center">72.0</div>
<div class="dt" style="left:1209px;top:696.5px;width:38px;text-align:center">61.5</div>
<div class="dt" style="left:17px;top:720.5px;width:80px;text-align:center">23</div>
<div class="dt" style="left:101px;top:720.5px">Mosquito</div>
<div class="dt" style="left:181px;top:720.5px">SUV</div>
<div class="dt" style="left:261px;top:720.5px">Sub-Compact</div>
<div class="dt" style="left:336px;top:720.5px;width:80px;text-align:right">12 800 руб.</div>
<div class="dt" style="left:416px;top:720.5px;width:80px;text-align:right">15 400 руб.</div>
<div class="dt" style="left:497px;top:720.5px;width:80px;text-align:center">2011</div>
<div class="dt" style="left:577px;top:720.5px;width:60px;text-align:center">4</div>
<div class="dt" style="left:637px;top:720.5px;width:60px;text-align:center">1.9</div>
<div class="dt" style="left:697px;top:720.5px;width:60px;text-align:center">1</div>
<div class="dt" style="left:757px;top:720.5px;width:60px;text-align:center">0</div>
<div class="dt" style="left:817px;top:720.5px;width:60px;text-align:center">0</div>
<div class="dt" style="left:877px;top:720.5px;width:60px;text-align:center">0</div>
<div class="dt" style="left:937px;top:720.5px;width:60px;text-align:center">0</div>
<div class="dt" style="left:997px;top:720.5px;width:60px;text-align:center">AUTO</div>
<div class="dt" style="left:1057px;top:720.5px;width:60px;text-align:center">6</div>
<div class="dt" style="left:1117px;top:720.5px;width:48px;text-align:center">171.9</div>
<div class="dt" style="left:1165px;top:720.5px;width:44px;text-align:center">72.0</div>
<div class="dt" style="left:1209px;top:720.5px;width:38px;text-align:center">61.5</div>
 </div>
<div class="hd" style="left:16px;top:143px;width:560px;text-align:center">General</div>
<div class="hd" style="left:576px;top:143px;width:420px;text-align:center">Engine</div>
<div class="hd" style="left:996px;top:143px;width:120px;text-align:center">Transmission</div>
<div class="hd" style="left:1116px;top:143px;width:130px;text-align:center">Size</div>
<div class="hd" style="left:16px;top:168px;width:80px;text-align:center">ID</div>
<div class="hd" style="left:96px;top:168px;width:80px;text-align:center">Name</div>
<div class="hd" style="left:176px;top:168px;width:80px;text-align:center">Class</div>
<div class="hd" style="left:256px;top:168px;width:80px;text-align:center">Subclass</div>
<div class="hd" style="left:336px;top:168px;width:80px;text-align:center">Cost</div>
<div class="hd" style="left:416px;top:168px;width:80px;text-align:center">Price</div>
<div class="hd" style="left:496px;top:168px;width:80px;text-align:center">Year</div>
<div class="hd" style="left:576px;top:168px;width:60px;text-align:center">Cylind...</div>
<div class="hd" style="left:636px;top:168px;width:60px;text-align:center">Litre</div>
<div class="hd" style="left:696px;top:168px;width:60px;text-align:center">Inline</div>
<div class="hd" style="left:756px;top:168px;width:60px;text-align:center">Vee</div>
<div class="hd" style="left:816px;top:168px;width:60px;text-align:center">Hybrid</div>
<div class="hd" style="left:876px;top:168px;width:60px;text-align:center">Super</div>
<div class="hd" style="left:936px;top:168px;width:60px;text-align:center">Turbo</div>
<div class="hd" style="left:996px;top:168px;width:60px;text-align:center">Type</div>
<div class="hd" style="left:1056px;top:168px;width:60px;text-align:center">Gears</div>
<div class="hd" style="left:1116px;top:168px;width:48px;text-align:center">L</div>
<div class="hd" style="left:1164px;top:168px;width:44px;text-align:center">W</div>
<div class="hd" style="left:1208px;top:168px;width:38px;text-align:center">H</div>
 <div id="sep"></div>
 <div id="vtrack"></div><div id="vthumb"></div>
 <div id="htrack"></div><div id="hthumb"></div>
</div>
<svg class="abs" style="left:0;top:0" width="1266" height="130">
 <defs>
  <linearGradient id="selg" x1="0" y1="0" x2="0" y2="1"><stop offset="0" stop-color="#d6e6ea"/><stop offset="0.45" stop-color="#c0d2d7"/><stop offset="1" stop-color="#b0c2c8"/></linearGradient>
  <linearGradient id="shd" x1="0" y1="0" x2="0" y2="1"><stop offset="0" stop-color="#282a2c" stop-opacity="0"/><stop offset="1" stop-color="#202224" stop-opacity="0.38"/></linearGradient>
 </defs>
 <path d="M438.5,121 Q444.5,121 444.5,115 L444.5,83.5 Q444.5,73.5 454.5,73.5 L509.5,73.5 Q519.5,73.5 519.5,83.5 L519.5,115 Q519.5,121 525.5,121 Z" fill="#5a5c5e" stroke="#4a4c4e" stroke-width="1"/>
 <path d="M527,121 Q533,121 533,115 L533,83.5 Q533,73.5 543,73.5 L683.5,73.5 Q693.5,73.5 693.5,83.5 L693.5,115 Q693.5,121 699.5,121 Z" fill="#5a5c5e" stroke="#4a4c4e" stroke-width="1"/>
 <path d="M906.5,121 Q912.5,121 912.5,115 L912.5,83.5 Q912.5,73.5 922.5,73.5 L1035.5,73.5 Q1045.5,73.5 1045.5,83.5 L1045.5,115 Q1045.5,121 1051.5,121 Z" fill="#5a5c5e" stroke="#4a4c4e" stroke-width="1"/>
 <rect x="8" y="110" width="1250" height="11" fill="url(#shd)"/>
 <path d="M700.5,121 Q706.5,121 706.5,115 L706.5,83.5 Q706.5,73.5 716.5,73.5 L888.5,73.5 Q898.5,73.5 898.5,83.5 L898.5,115 Q898.5,121 904.5,121 Z" fill="url(#selg)" stroke="#3e4246" stroke-opacity="0.7" stroke-width="1"/>
</svg>
<div class="tl" style="left:461px">Live</div>
<div class="tl" style="left:551px">Sales History</div>
<div class="tl" style="left:724px">Product Listings</div>
<div class="tl" style="left:929.5px">Heat Map</div>
<svg class="abs" style="left:0;top:0" width="420" height="125">
 <defs>
  <filter id="sl" x="-20%" y="-40%" width="140%" height="180%">
   <feGaussianBlur in="SourceGraphic" stdDeviation="2" result="b"/>
   <feMerge><feMergeNode in="b"/></feMerge>
  </filter>
 </defs>
 <g transform="translate(28.5,89.5) scale(1.165,1)">
  <text x="0" y="0" font-family="Liberation Sans" font-weight="bold" font-size="49" fill="#c4c6c8" stroke="#c4c6c8" stroke-width="9" stroke-linejoin="round">henley</text>
  <text x="0" y="0" font-family="Liberation Sans" font-weight="bold" font-size="49" fill="#353739" stroke="#353739" stroke-width="3" stroke-linejoin="round">henley</text>
 </g>
 <g transform="translate(222,94.5) scale(0.80,1)">
  <text x="0" y="0" font-family="Liberation Sans" font-size="63" fill="#2a8ee0" fill-opacity="0.9" filter="url(#sl)">Sales</text>
  <text x="0" y="0" font-family="Liberation Sans" font-size="63" fill="#98d8fc" stroke="#2e5878" stroke-width="1.5">Sales</text>
 </g>
</svg>
</body></html>
